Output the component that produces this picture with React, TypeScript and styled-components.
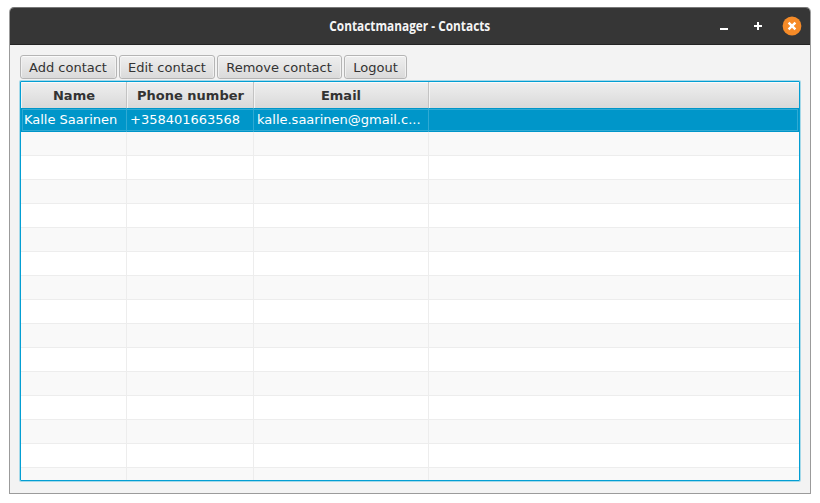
import React from "react";
import styled, { createGlobalStyle, css } from "styled-components";

const GlobalStyle = createGlobalStyle`
  * { box-sizing: border-box; }
  body { margin: 0; background: #fff; overflow: hidden; }
`;

const Desktop = styled.div`
  width: 820px;
  height: 503px;
  padding: 7px 9px 9px;
  background: #fff;
  font: 13px/16px "DejaVu Sans", sans-serif;
  color: #333;
`;

const Window = styled.div`
  display: flex;
  flex-direction: column;
  width: 802px;
  height: 487px;
  border: 1px solid #9b9b9b;
  border-top-color: #777;
  border-radius: 5px 5px 0 0;
  background: #f3f3f3;
  overflow: hidden;
`;

const TitleBar = styled.header`
  flex: none;
  display: grid;
  grid-template-columns: 1fr auto 1fr;
  align-items: center;
  height: 37px;
  background: #363636;
  border-bottom: 1px solid #232323;
`;

const Title = styled.h1`
  grid-column: 2;
  margin: 0;
  width: 162px;
  display: flex;
  justify-content: center;
  white-space: nowrap;
  color: #f5f5f5;
  font: 700 13.5px/20px "Open Sans", sans-serif;

  span { transform: scaleX(0.877); }
`;

const Controls = styled.div`
  justify-self: end;
  display: flex;
  gap: 14px;
  padding-right: 8px;

  svg { display: block; }
`;

const Content = styled.main`
  flex: 1;
  min-height: 0;
  display: flex;
  flex-direction: column;
  gap: 2px;
  padding: 10px 10px 12px;
`;

const Toolbar = styled.div`
  display: flex;
  gap: 2px;
`;

const Button = styled.button<{ $width: number; $padRight: number }>`
  width: ${(p) => p.$width}px;
  height: 24px;
  padding: 2px ${(p) => p.$padRight}px 0 0;
  border: 1px solid #b5b5b5;
  border-radius: 3px;
  background: linear-gradient(#efefef, #dadada);
  box-shadow: inset 0 1px #fbfbfb, inset 1px 0 #f1f1f1, inset -1px 0 #f1f1f1;
  color: #333;
  font: inherit;
  white-space: nowrap;
`;

const Table = styled.div`
  flex: 1;
  min-height: 0;
  overflow: hidden;
  border: 1px solid #039ed3;
  box-shadow: 0 0 0 1px #a5d9e9;
  border-radius: 1px;
  background: #fff;
`;

const columns = css`
  display: grid;
  grid-template-columns: 106px 127px 175px 1fr;
`;

const HeaderRow = styled.div`
  ${columns}
  height: 26px;
  background: linear-gradient(#efefef, #d9d9d9);
  box-shadow: inset 0 1px #fafafa;
`;

const HeaderCell = styled.div`
  padding: 6px 0 0 1px;
  text-align: center;
  font-weight: bold;
  border-right: 1px solid #c3c3c3;
  box-shadow: inset 1px 0 #f3f3f3;

  &:nth-child(3) { padding-left: 0; }
  &:last-child { border-right: 0; }
`;

const Row = styled.div<{ $odd?: boolean; $selected?: boolean }>`
  ${columns}
  height: 24px;
  background: ${(p) => (p.$selected ? "#0096c9" : p.$odd ? "#f9f9f9" : "#fff")};
  color: ${(p) => (p.$selected ? "#fff" : "#333")};
  border-bottom: ${(p) => (p.$selected ? "0" : "1px solid #ededed")};
  ${(p) =>
    p.$selected &&
    css`
      outline: 1px solid #30aad4;
      outline-offset: -2px;
    `}
`;

const Cell = styled.div<{ $selected?: boolean }>`
  padding: 4px 7px 0 3px;
  white-space: nowrap;
  overflow: hidden;
  border-right: 1px solid ${(p) => (p.$selected ? "#30aad4" : "#ededed")};

  &:last-child { border-right: 0; }
`;

const actions = [
  { label: "Add contact", width: 97, padRight: 1 },
  { label: "Edit contact", width: 96, padRight: 0 },
  { label: "Remove contact", width: 125, padRight: 1 },
  { label: "Logout", width: 63, padRight: 0 },
];
const headings = ["Name", "Phone number", "Email", ""];
const contact = ["Kalle Saarinen", "+358401663568", "kalle.saarinen@gmail.c...", ""];
const emptyRows = Array.from({ length: 15 }, (_, i) => i);

export default function App() {
  return (
    <>
      <GlobalStyle />
      <Desktop>
        <Window>
          <TitleBar>
            <Title><span>Contactmanager - Contacts</span></Title>
            <Controls>
              <svg width="20" height="20" viewBox="0 0 20 20">
                <path d="M6 12h8v2H6z" fill="#fff" />
              </svg>
              <svg width="20" height="20" viewBox="0 0 20 20">
                <path d="M6 10h8M10 6v8" stroke="#fff" strokeWidth="2" />
              </svg>
              <svg width="20" height="20" viewBox="0 0 20 20">
                <circle cx="10" cy="10" r="9.4" fill="#f68b28" />
                <path d="M6.6 6.6l6.8 6.8M13.4 6.6l-6.8 6.8" stroke="#fff" strokeWidth="2.4" />
              </svg>
            </Controls>
          </TitleBar>
          <Content>
            <Toolbar>
              {actions.map((a) => (
                <Button key={a.label} $width={a.width} $padRight={a.padRight}>{a.label}</Button>
              ))}
            </Toolbar>
            <Table>
              <HeaderRow>
                {headings.map((h, i) => <HeaderCell key={i}>{h}</HeaderCell>)}
              </HeaderRow>
              <Row $selected>
                {contact.map((c, i) => <Cell key={i} $selected>{c}</Cell>)}
              </Row>
              {emptyRows.map((r) => (
                <Row key={r} $odd={r % 2 === 0}>
                  {headings.map((_, i) => <Cell key={i} />)}
                </Row>
              ))}
            </Table>
          </Content>
        </Window>
      </Desktop>
    </>
  );
}
